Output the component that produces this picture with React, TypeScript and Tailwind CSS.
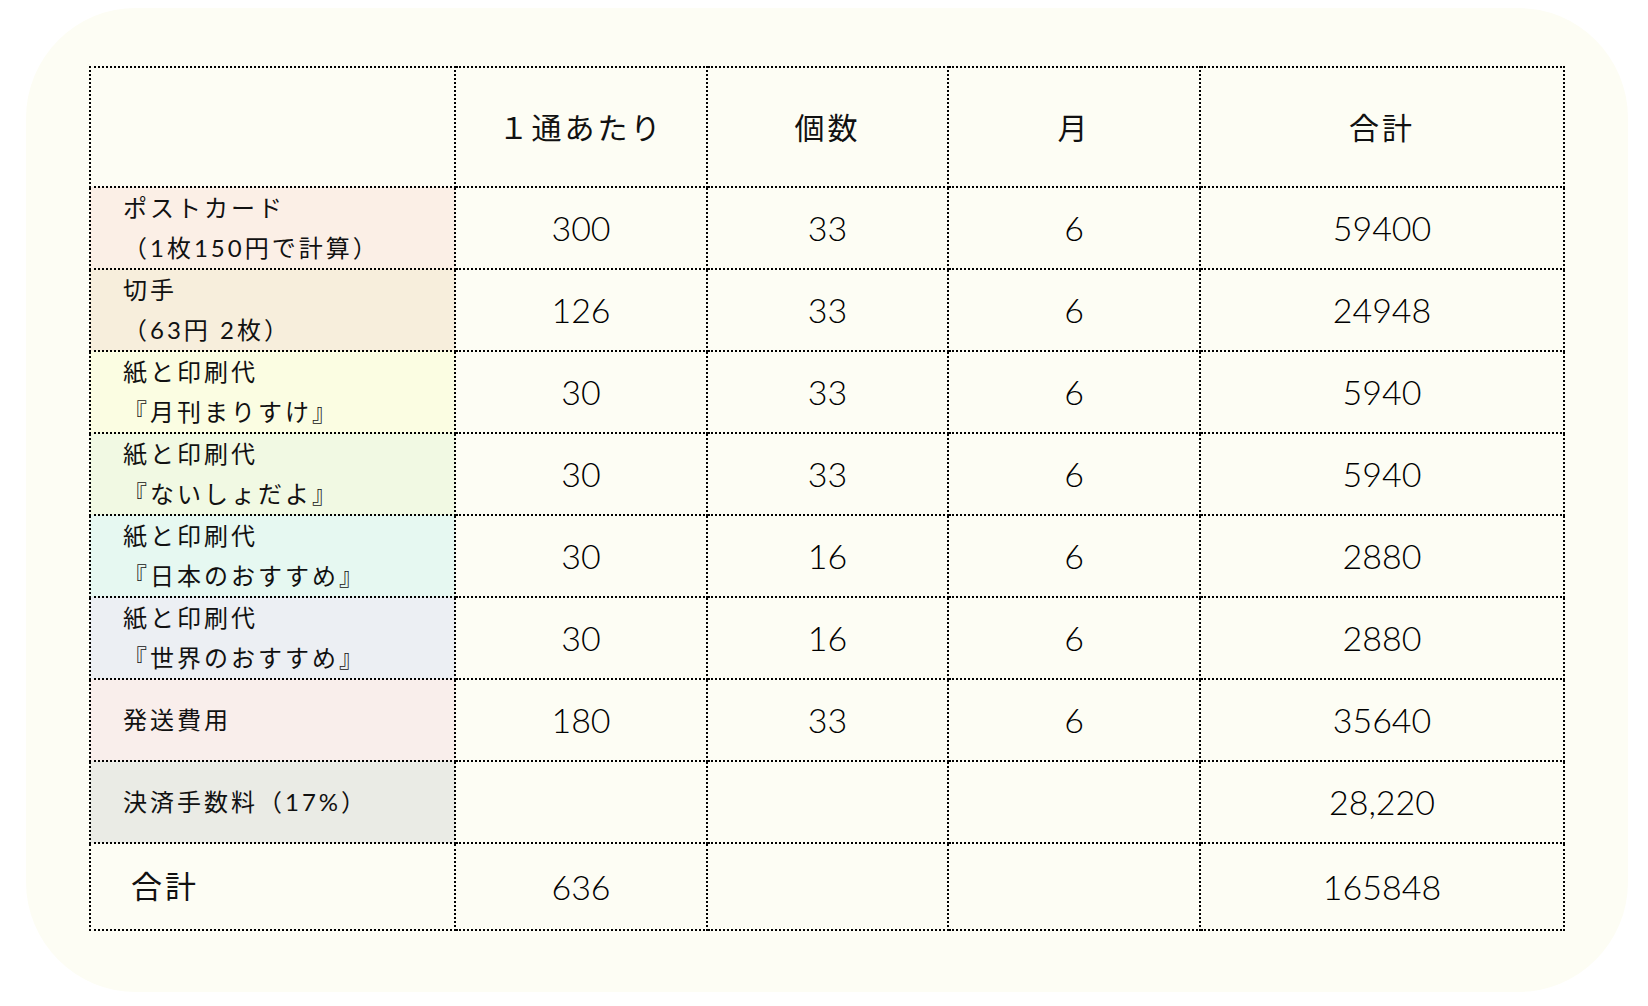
const font = "font-['Lato','Noto_Sans_CJK_JP',sans-serif]";

type Row = {
  label: string[];
  bg: string;
  per: string;
  count: string;
  month: string;
  total: string;
};

const rows: Row[] = [
  { label: ["ポストカード", "（1枚150円で計算）"], bg: "bg-[#fbefe6]", per: "300", count: "33", month: "6", total: "59400" },
  { label: ["切手", "（63円 2枚）"], bg: "bg-[#f7eedc]", per: "126", count: "33", month: "6", total: "24948" },
  { label: ["紙と印刷代", "『月刊まりすけ』"], bg: "bg-[#fbfde2]", per: "30", count: "33", month: "6", total: "5940" },
  { label: ["紙と印刷代", "『ないしょだよ』"], bg: "bg-[#f1f9e3]", per: "30", count: "33", month: "6", total: "5940" },
  { label: ["紙と印刷代", "『日本のおすすめ』"], bg: "bg-[#e6f8f1]", per: "30", count: "16", month: "6", total: "2880" },
  { label: ["紙と印刷代", "『世界のおすすめ』"], bg: "bg-[#eceff3]", per: "30", count: "16", month: "6", total: "2880" },
  { label: ["発送費用"], bg: "bg-[#f9eeeb]", per: "180", count: "33", month: "6", total: "35640" },
  { label: ["決済手数料（17%）"], bg: "bg-[#eaebe5]", per: "", count: "", month: "", total: "28,220" },
];

const cell = "border-2 border-dotted border-black p-0 text-center align-middle";
const num = "text-[34px] font-light leading-none text-black";

export default function App() {
  return (
    <div className={`min-h-screen bg-white pt-[8px] pl-[26px] ${font}`}>
      <div className="w-[1602px] h-[984px] rounded-[110px] bg-[#fdfdf4] pt-[58px] pl-[63px]">
        <table className="w-[1474px] table-fixed border-collapse">
          <colgroup>
            <col className="w-[365px]" />
            <col className="w-[252px]" />
            <col className="w-[241px]" />
            <col className="w-[252px]" />
            <col className="w-[364px]" />
          </colgroup>
          <thead>
            <tr className="h-[120px]">
              <th className={cell}></th>
              {["１通あたり", "個数", "月", "合計"].map((h) => (
                <th key={h} className={`${cell} text-[30px] font-normal tracking-[3px] text-[#111]`}>
                  {h}
                </th>
              ))}
            </tr>
          </thead>
          <tbody>
            {rows.map((r, i) => (
              <tr key={i} className="h-[82px]">
                <td className={`${cell} ${r.bg} text-left pl-[32px]`}>
                  {r.label.map((l, j) => (
                    <div key={j} className="text-[24px] leading-[40px] tracking-[3px] text-[#111]">
                      {l}
                    </div>
                  ))}
                </td>
                <td className={`${cell} ${num}`}>{r.per}</td>
                <td className={`${cell} ${num}`}>{r.count}</td>
                <td className={`${cell} ${num}`}>{r.month}</td>
                <td className={`${cell} ${num}`}>{r.total}</td>
              </tr>
            ))}
            <tr className="h-[87px]">
              <td className={`${cell} text-left pl-[40px] text-[31px] tracking-[3px] text-[#111]`}>合計</td>
              <td className={`${cell} ${num}`}>636</td>
              <td className={cell}></td>
              <td className={cell}></td>
              <td className={`${cell} ${num}`}>165848</td>
            </tr>
          </tbody>
        </table>
      </div>
    </div>
  );
}
